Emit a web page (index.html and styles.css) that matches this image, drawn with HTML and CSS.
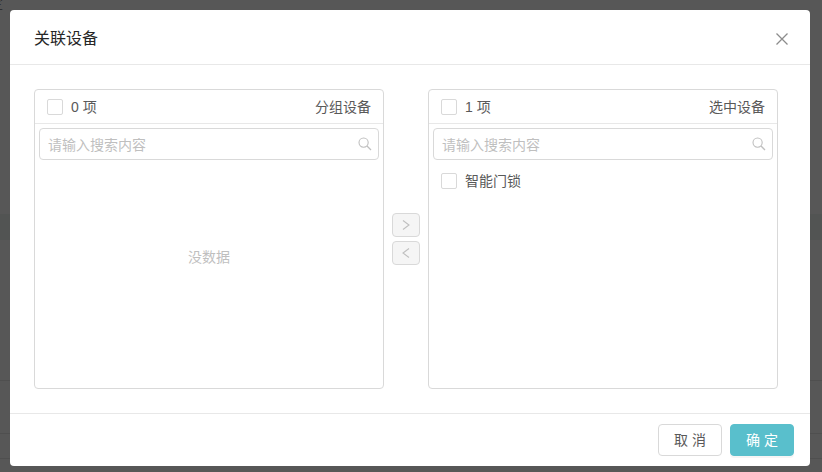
FILE: index.html
```html
<!DOCTYPE html>
<html lang="zh-CN">
<head>
<meta charset="utf-8">
<title>关联设备</title>
<link rel="stylesheet" href="styles.css">
</head>
<body>
<div class="backdrop">
  <span class="backdrop-glyph">定</span>
  <div class="band"></div>
  <div class="rule rule-a"></div>
  <div class="rule rule-b"></div>
  <div class="rule rule-c"></div>
</div>
<div class="modal">
  <header class="modal-header">
    <h1 class="modal-title">关联设备</h1>
    <svg class="close" width="14" height="14" viewBox="0 0 14 14"><path d="M1.5 1.5L12.5 12.5M12.5 1.5L1.5 12.5" fill="none" stroke="#8c8c8c" stroke-width="1.3"/></svg>
  </header>
  <div class="modal-body">
    <section class="panel">
      <div class="panel-head">
        <span class="check"></span><span class="count">0 项</span><span class="panel-title">分组设备</span>
      </div>
      <div class="search">
        <span class="placeholder">请输入搜索内容</span>
        <svg class="search-icon" width="14" height="14" viewBox="0 0 14 14"><circle cx="5.6" cy="5.6" r="4.6" fill="none" stroke="#bfbfbf" stroke-width="1.1"/><path d="M9 9L13 13" stroke="#bfbfbf" stroke-width="1.3" fill="none"/></svg>
      </div>
      <div class="empty">没数据</div>
    </section>
    <div class="ops">
      <button class="op" type="button"><svg width="8" height="12" viewBox="0 0 8 12"><path d="M1 1.5L7 6L1 10.5" fill="none" stroke="#bfbfbf" stroke-width="1.1"/></svg></button>
      <button class="op" type="button"><svg width="8" height="12" viewBox="0 0 8 12"><path d="M7 1.5L1 6L7 10.5" fill="none" stroke="#bfbfbf" stroke-width="1.1"/></svg></button>
    </div>
    <section class="panel">
      <div class="panel-head">
        <span class="check"></span><span class="count">1 项</span><span class="panel-title">选中设备</span>
      </div>
      <div class="search">
        <span class="placeholder">请输入搜索内容</span>
        <svg class="search-icon" width="14" height="14" viewBox="0 0 14 14"><circle cx="5.6" cy="5.6" r="4.6" fill="none" stroke="#bfbfbf" stroke-width="1.1"/><path d="M9 9L13 13" stroke="#bfbfbf" stroke-width="1.3" fill="none"/></svg>
      </div>
      <div class="item"><span class="check"></span><span class="item-label">智能门锁</span></div>
    </section>
  </div>
  <footer class="modal-footer">
    <button class="btn" type="button">取 消</button>
    <button class="btn btn-primary" type="button">确 定</button>
  </footer>
</div>
</body>
</html>
```
FILE: styles.css
```css
* { box-sizing: border-box; }
html, body { margin: 0; height: 100%; }
body {
  width: 822px;
  height: 472px;
  overflow: hidden;
  position: relative;
  background: #575757;
  font-family: "Liberation Sans", "Noto Sans CJK SC", sans-serif;
  font-size: 14px;
  line-height: 20px;
  color: #595959;
}
.backdrop { position: absolute; inset: 0; overflow: hidden; }
.backdrop-glyph {
  position: absolute;
  left: -11px;
  top: -7px;
  color: #2f2f2f;
}
.band { position: absolute; left: 0; right: 0; top: 214px; height: 26px; background: #525453; }
.rule { position: absolute; left: 0; right: 0; height: 1px; background: #4f4f4f; }
.rule-a { top: 380px; }
.rule-b { top: 433px; }
.rule-c { top: 458px; }
.modal {
  position: absolute;
  left: 10px;
  top: 10px;
  width: 800px;
  height: 456px;
  background: #fff;
  border-radius: 4px;
  display: flex;
  flex-direction: column;
}
.modal-header {
  height: 55px;
  flex: none;
  display: flex;
  align-items: center;
  justify-content: space-between;
  padding: 0 21px 0 24px;
  border-bottom: 1px solid #e8e8e8;
}
.modal-title { margin: 4px 0 0; font-size: 16px; font-weight: 400; color: #262626; line-height: 22px; }
.close { margin-top: 4px; }
.modal-body {
  flex: 1;
  display: flex;
  align-items: stretch;
  padding: 24px 32px 24px 24px;
}
.panel {
  width: 350px;
  height: 300px;
  border: 1px solid #d9d9d9;
  border-radius: 4px;
  display: flex;
  flex-direction: column;
  flex: none;
}
.panel-head {
  height: 34px;
  flex: none;
  display: flex;
  align-items: center;
  padding: 0 12px;
  border-bottom: 1px solid #e8e8e8;
}
.check {
  width: 16px;
  height: 16px;
  flex: none;
  border: 1px solid #d9d9d9;
  border-radius: 2px;
  background: #fff;
}
.count { margin-left: 8px; }
.panel-title { margin-left: auto; }
.search {
  height: 32px;
  margin: 4px 4px 0;
  flex: none;
  border: 1px solid #d9d9d9;
  border-radius: 4px;
  display: flex;
  align-items: center;
  justify-content: space-between;
  padding: 0 6px 0 8px;
}
.placeholder { color: #bfbfbf; padding-top: 2px; }
.search-icon { flex: none; }
.empty {
  flex: 1;
  display: flex;
  align-items: center;
  justify-content: center;
  padding-bottom: 34px;
  color: #bfbfbf;
}
.item {
  display: flex;
  align-items: center;
  height: 32px;
  padding: 0 12px;
  margin-top: 5px;
}
.item-label { margin-left: 8px; }
.ops {
  width: 44px;
  flex: none;
  display: flex;
  flex-direction: column;
  align-items: center;
  justify-content: center;
  gap: 4px;
}
.op {
  width: 28px;
  height: 24px;
  padding: 0;
  border: 1px solid #d9d9d9;
  border-radius: 4px;
  background: #f5f5f5;
  display: flex;
  align-items: center;
  justify-content: center;
}
.modal-footer {
  height: 53px;
  flex: none;
  border-top: 1px solid #e8e8e8;
  display: flex;
  justify-content: flex-end;
  align-items: center;
  gap: 8px;
  padding: 0 16px;
}
.btn {
  width: 64px;
  height: 32px;
  padding: 0;
  border: 1px solid #d9d9d9;
  border-radius: 4px;
  background: #fff;
  color: #595959;
  font: inherit;
}
.btn-primary {
  background: #59bfcc;
  border-color: #59bfcc;
  color: #fff;
  box-shadow: 0 2px 0 rgba(0, 0, 0, 0.04);
}
```
